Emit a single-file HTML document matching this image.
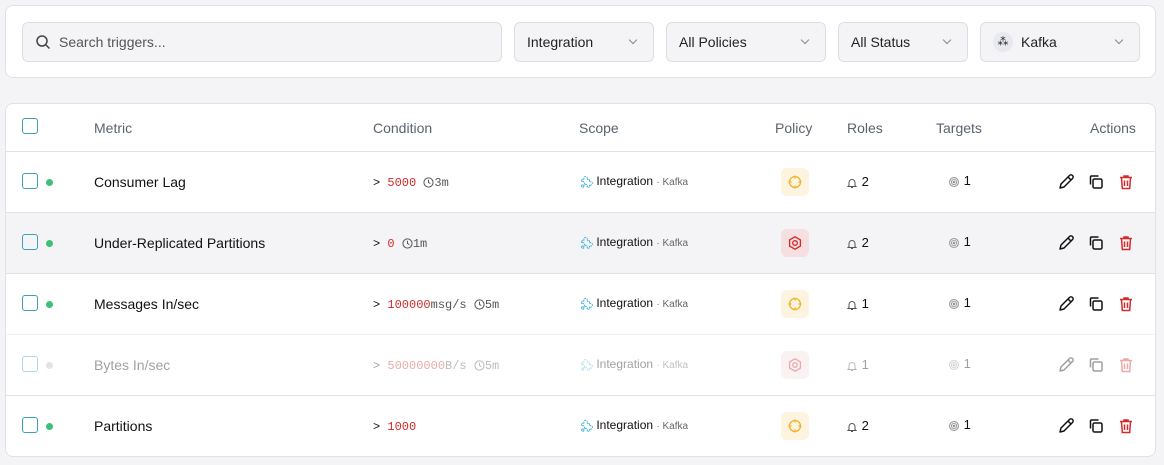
<!DOCTYPE html><html><head><style>
*{box-sizing:border-box;margin:0;padding:0}
body{width:1164px;height:465px;background:#f4f4f6;font-family:"Liberation Sans",sans-serif;color:#111;position:relative;overflow:hidden}
.card{position:absolute;left:5px;width:1151px;background:#fff;border:1px solid #dfe1e6;border-radius:8px}
.f{position:absolute;top:16px;height:40px;border:1px solid #dcdee3;border-radius:6px;background:#f4f4f6;font-size:14px;display:flex;align-items:center;padding:0 12px;color:#222}
.chev{position:absolute;right:17px;top:14px;width:6px;height:6px;border-right:1.3px solid #888;border-bottom:1.3px solid #888;transform:rotate(45deg)}
.abs{position:absolute}
.hdr{font-size:14px;color:#5b6270;top:16px}
.row{position:absolute;left:0;width:1149px;height:61px;border-top:1px solid #e0e2e7}
.cb{position:absolute;left:16px;width:16px;height:16px;border:1.5px solid #3f9eb8;border-radius:3px}
.dot{position:absolute;left:40px;width:7px;height:7px;border-radius:50%;background:#3ec07a}
.t{position:absolute;font-size:14px}
.mono{font-family:"Liberation Mono",monospace;font-size:12px}
.pol{position:absolute;left:775px;top:16px;width:28px;height:28px;border-radius:6px;display:flex;align-items:center;justify-content:center}
svg{display:inline-block;vertical-align:middle}
.act{position:absolute;left:1051px;top:21px;display:flex}
.act svg{margin-right:12px}
</style></head><body>
<div class="card" style="top:5px;height:73px">
<div class="f" style="left:16px;width:480px;color:#555"><svg width="16" height="16" viewBox="0 0 16 16" style="margin-right:8px"><circle cx="7" cy="7" r="5" fill="none" stroke="#444" stroke-width="1.5"/><path d="M11 11l3.5 3.5" stroke="#444" stroke-width="1.5"/></svg>Search triggers...</div>
<div class="f" style="left:508px;width:140px">Integration<span class="chev"></span></div>
<div class="f" style="left:660px;width:160px">All Policies<span class="chev"></span></div>
<div class="f" style="left:832px;width:130px">All Status<span class="chev"></span></div>
<div class="f" style="left:974px;width:160px"><span style="width:20px;height:20px;border-radius:50%;background:#e8e9ee;margin-right:8px;font-size:11px;text-align:center;line-height:20px">⁂</span>Kafka<span class="chev"></span></div>
</div>
<div class="card" style="top:103px;height:354px;overflow:hidden">
<div class="cb" style="top:14px"></div>
<div class="abs hdr" style="left:88px">Metric</div>
<div class="abs hdr" style="left:367px">Condition</div>
<div class="abs hdr" style="left:573px">Scope</div>
<div class="abs hdr" style="left:769px">Policy</div>
<div class="abs hdr" style="left:841px">Roles</div>
<div class="abs hdr" style="left:930px">Targets</div>
<div class="abs hdr" style="left:1084px">Actions</div>
</div>
<div id="rows" style="position:absolute;left:6px;top:104px;width:1149px">
</div>
<script>
const rows=[["Consumer Lag","5000","","3m","2",0,0],["Under-Replicated Partitions","0","","1m","2",1,0],["Messages In/sec","100000","msg/s","5m","1",0,0],["Bytes In/sec","50000000","B/s","5m","1",1,1],["Partitions","1000","","","2",0,0]];
let h="";
const pz='<svg width="16" height="16" viewBox="0 0 16 16"><circle cx="8" cy="8" r="5.5" fill="none" stroke="#f0b429" stroke-width="1.3"/><path d="M8 1.5v3M8 11.5v3M1.5 8h3M11.5 8h3" stroke="#f0b429" stroke-width="1.3"/></svg>';
const pc='<svg width="16" height="16" viewBox="0 0 16 16"><path d="M8 1.8l5.4 3.1v6.2L8 14.2 2.6 11.1V4.9z" fill="none" stroke="#d42a2a" stroke-width="1.3"/><circle cx="8" cy="8" r="2.3" fill="none" stroke="#d42a2a" stroke-width="1.3"/></svg>';
const clk='<svg width="11" height="11" viewBox="0 0 12 12"><circle cx="6" cy="6" r="5" fill="none" stroke="#555" stroke-width="1.1"/><path d="M6 3v3l2 1.2" fill="none" stroke="#555" stroke-width="1.1"/></svg>';
const puz='<svg width="14" height="14" viewBox="0 0 16 16"><path d="M3 5h3a2 2 0 1 1 3 0h3v3a2 2 0 1 1 0 3v3H9a2 2 0 1 0-3 0H3v-3a2 2 0 1 0 0-3z" fill="none" stroke="#4cb8d8" stroke-width="1.2" stroke-dasharray="2 1"/></svg>';
const bell='<svg width="12" height="12" viewBox="0 0 12 12"><path d="M3 8.5V5.5a3 3 0 0 1 6 0v3l1 1H2z M5 10.5h2" fill="none" stroke="#555" stroke-width="1"/></svg>';
const tgt='<svg width="12" height="12" viewBox="0 0 12 12"><circle cx="6" cy="6" r="5" fill="#999"/><circle cx="6" cy="6" r="3.5" fill="none" stroke="#fff" stroke-width=".8"/><circle cx="6" cy="6" r="1.8" fill="none" stroke="#fff" stroke-width=".8"/></svg>';
const pen='<svg width="18" height="18" viewBox="0 0 18 18"><path d="M3 15l1-4 8.5-8.5a2 2 0 0 1 3 3L7 14z M11 4l3 3" fill="none" stroke="#111" stroke-width="1.5" stroke-linejoin="round"/></svg>';
const cp='<svg width="18" height="18" viewBox="0 0 18 18"><rect x="6" y="6" width="9" height="9" rx="1.5" fill="none" stroke="#111" stroke-width="1.5"/><path d="M3.5 11.5V4a1 1 0 0 1 1-1h7" fill="none" stroke="#111" stroke-width="1.5"/></svg>';
const tr='<svg width="18" height="18" viewBox="0 0 18 18"><path d="M3 4.5h12M7 4.5V3h4v1.5M4.5 4.5l.8 11h7.4l.8-11M7.5 7.5v5.5M10.5 7.5v5.5" fill="none" stroke="#d42a2a" stroke-width="1.5"/></svg>';
rows.forEach((r,i)=>{const top=47+61*i;
h+=`<div class="row" style="top:${top}px;${i==1?'background:#f4f4f6;':''}${r[6]?'opacity:.4;':''}"><div class="cb" style="top:21px"></div><div class="dot" style="top:27px;${r[6]?'background:#bbb':''}"></div><div class="t" style="left:88px;top:22px">${r[0]}</div>
<div class="t mono" style="left:367px;top:24px">&gt; <span style="color:#d42a2a">${r[1]}</span><span style="color:#555">${r[2]}</span>${r[3]?' '+clk+'<span style="color:#555">'+r[3]+'</span>':''}</div>
<div class="t" style="left:573px;top:22px;font-size:12px">${puz} Integration <span style="font-size:10px;color:#666">· Kafka</span></div>
<div class="pol" style="background:${r[5]?'#f5dfe0':'#fdf4e0'}">${r[5]?pc:pz}</div>
<div class="t" style="left:840px;top:22px;font-size:13px">${bell} ${r[4]}</div>
<div class="t" style="left:942px;top:21px;font-size:13px">${tgt} 1</div>
<div class="act">${pen}${cp}${tr}</div></div>`;});
document.getElementById('rows').innerHTML=h;
</script>
</body></html>
